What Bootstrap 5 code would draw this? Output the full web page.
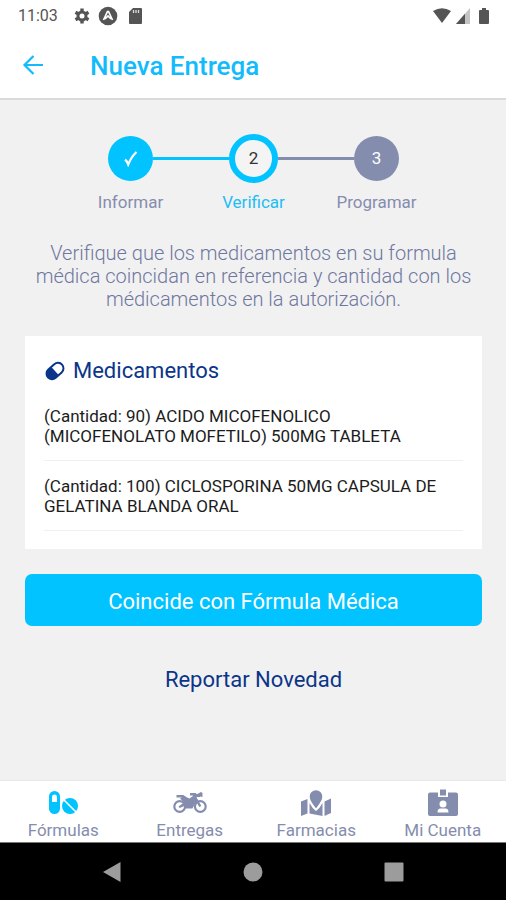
<!DOCTYPE html>
<html lang="es">
<head>
<meta charset="utf-8">
<meta name="viewport" content="width=device-width, initial-scale=1">
<title>Nueva Entrega</title>
<link href="https://cdn.jsdelivr.net/npm/bootstrap@5.3.0/dist/css/bootstrap.min.css" rel="stylesheet">
<style>
  :root { --sky: #00c3ff; --slate: #858dae; --navy: #0b3589; }
  body { font-family: Roboto, "Noto Sans", sans-serif; background: #f1f1f1; color: #1c1c1c; }
  svg { display: block; }
  .status { height: 32px; padding: 0 16px 0 18px; font-size: 16px; color: #555; }
  .topbar { height: 68px; padding: 2px 22px 0; border-bottom: 2px solid #dadada; gap: 46px; }
  .topbar h1 { font-size: 26px; line-height: 32px; font-weight: 500; color: #12bbfb; }
  .content { padding: 34px 24px 24px 25px; }
  .steps { max-width: 369px; }
  .step { flex: 1 1 0; color: var(--slate); font-size: 17px; line-height: 24px; }
  .track { height: 48px; }
  .track::before, .track::after { content: ""; flex: 1; height: 3px; background: var(--slate); }
  .step:first-child .track::before, .step:last-child .track::after { background: transparent; }
  .step.done .track::after, .step.now .track::before { background: var(--sky); }
  .dot { width: 45px; height: 45px; border-radius: 50%; background: var(--slate); color: #fff; }
  .done .dot { background: var(--sky); }
  .now .dot { width: 49px; height: 49px; background: #f4f4f4; border: 6px solid var(--sky); color: #333; }
  .now .caption { color: #22bdf5; }
  .caption { margin-top: 8px; }
  .intro { margin: 28px 0 25px; padding: 0 4px; color: #6f779f; font-size: 20px; font-weight: 300; line-height: 23px; }
  .panel { padding: 19px 19px 18px; }
  .panel h2 { font-size: 22px; line-height: 32px; font-weight: 400; color: var(--navy); gap: 7px; margin-bottom: 3px; }
  .meds li { font-size: 17px; line-height: 20px; padding: 16px 0 14px; border-bottom: 1px solid #eef1f1; }
  .meds li + li { padding-top: 15px; }
  .main-action { margin-top: 25px; height: 52px; border-radius: 7px; background: var(--sky); color: #fff; font-size: 22px; line-height: 32px; }
  .main-action:hover { background: #00b4ec; color: #fff; }
  .second-action { margin-top: 38px; color: var(--navy); font-size: 22px; line-height: 32px; }
  .tabs { height: 62px; border-top: 1px solid #e8e8e8; font-size: 17px; line-height: 20px; }
  .tabs a { color: var(--slate); padding-top: 8px; gap: 3px; }
  .tabs a.active svg { color: var(--sky); }
  .sysnav { height: 58px; background: #000; border-top: 1px solid #777; padding: 0 42px; }
  .sysnav button { flex: 1; color: #9c9c9c; }
</style>
<script src="https://cdn.jsdelivr.net/npm/bootstrap@5.3.0/dist/js/bootstrap.bundle.min.js"></script>
</head>
<body>
<div class="d-flex flex-column min-vh-100">
  <div class="status bg-white d-flex align-items-center">
    <span>11:03</span>
    <svg class="ms-3" width="16" height="16" viewBox="0 0 16 16"><g fill="none" stroke="currentColor"><circle cx="8" cy="8" r="4" stroke-width="3"/><path stroke-width="3.4" d="M8 .5v3M8 12.500v3M1.500 4.250l2.600 1.500M11.900 10.250l2.600 1.500M1.500 11.750l2.600-1.500M11.900 5.750l2.600-1.500"/></g></svg>
    <svg class="ms-2" width="20" height="20" viewBox="0 0 20 20"><circle cx="10" cy="10" r="9.300" fill="currentColor"/><path d="M5.500 14 9.500 5.500h1l4 8.500M7 13 10 10l3 3" fill="none" stroke="#fff" stroke-width="1.700"/></svg>
    <svg class="ms-2" width="18" height="18" viewBox="0 0 18 18"><path fill="currentColor" d="M7 1h8q1 0 1 1v14q0 1-1 1H4q-1 0-1-1V5z"/><path stroke="#ddd" stroke-width="1.300" d="M7.500 3v3M10 3v3M12.500 3v3"/></svg>
    <svg class="ms-auto" width="20" height="18" viewBox="0 0 20 18"><path fill="currentColor" d="M1 4q9-5.500 18 0l-9 12z"/></svg>
    <svg class="ms-1" width="14" height="16" viewBox="0 0 14 16"><path fill="#c4c4c4" d="M14 0v16H0z"/><path fill="currentColor" d="M9 5.700V16H0z"/></svg>
    <svg class="ms-2" width="12" height="18" viewBox="0 0 12 18"><path fill="currentColor" d="M4 1h4v2h2q1 0 1 1v12q0 1-1 1H2q-1 0-1-1V4q0-1 1-1h2z"/></svg>
  </div>
  <header class="topbar bg-white d-flex align-items-center">
    <button type="button" class="btn p-0 border-0" aria-label="Volver"><svg width="22" height="22" viewBox="0 0 22 22" fill="none" stroke="#12bbfb" stroke-width="2.200"><path d="M21 10H3M11.500 1 2.500 10l9 9"/></svg></button>
    <h1 class="m-0">Nueva Entrega</h1>
  </header>

  <main class="content flex-grow-1 d-flex flex-column">
    <div class="steps d-flex w-100 mx-auto text-center">
      <div class="step done">
        <div class="track d-flex align-items-center"><span class="dot d-flex align-items-center justify-content-center"><svg width="16" height="18" viewBox="0 0 16 18"><path d="M2 10.500Q4 12 5.200 15.500 8.500 7.500 13.500 3" fill="none" stroke="#fff" stroke-width="2.200"/></svg></span></div>
        <div class="caption">Informar</div>
      </div>
      <div class="step now">
        <div class="track d-flex align-items-center"><span class="dot d-flex align-items-center justify-content-center">2</span></div>
        <div class="caption">Verificar</div>
      </div>
      <div class="step">
        <div class="track d-flex align-items-center"><span class="dot d-flex align-items-center justify-content-center">3</span></div>
        <div class="caption">Programar</div>
      </div>
    </div>

    <p class="intro text-center">Verifique que los medicamentos en su formula médica coincidan en referencia y cantidad con los médicamentos en la autorización.</p>

    <section class="panel bg-white">
      <h2 class="d-flex align-items-center"><svg width="22" height="20" viewBox="0 0 22 20"><g transform="rotate(-42 11 10)"><rect x="1.500" y="4.500" width="19" height="11" rx="5.500" fill="#fff" stroke="currentColor" stroke-width="2"/><path fill="currentColor" d="M11 4.500v11H7a5.500 5.500 0 0 1 0-11z"/></g></svg>Medicamentos</h2>
      <ul class="meds list-unstyled mb-0">
        <li>(Cantidad: 90) ACIDO MICOFENOLICO (MICOFENOLATO MOFETILO) 500MG TABLETA</li>
        <li>(Cantidad: 100) CICLOSPORINA 50MG CAPSULA DE GELATINA BLANDA ORAL</li>
      </ul>
    </section>

    <button type="button" class="main-action btn border-0 w-100 pt-1 pb-0">Coincide con Fórmula Médica</button>
    <a href="#" class="second-action align-self-center text-decoration-none">Reportar Novedad</a>
  </main>

  <nav class="tabs bg-white d-flex" aria-label="Principal">
    <a href="#" class="active col-3 d-flex flex-column align-items-center text-decoration-none">
      <svg width="32" height="28" viewBox="0 0 32 28"><rect x="2" y="2" width="11" height="23" rx="5.500" fill="currentColor"/><path fill="#fff" d="M5 13V8a2.500 2.500 0 0 1 5 0v5z"/><circle cx="23" cy="17" r="8" fill="currentColor"/><path stroke="#fff" stroke-width="1.600" d="m16.500 10.500 13 13"/></svg>
      <span>Fórmulas</span></a>
    <a href="#" class="col-3 d-flex flex-column align-items-center text-decoration-none">
      <svg width="34" height="28" viewBox="0 0 34 28"><g fill="none" stroke="currentColor" stroke-width="2.200"><circle cx="6.700" cy="17.500" r="5.400"/><circle cx="27.300" cy="17.500" r="5.400"/><path stroke-width="2.400" d="m20.500 5.500 6.800 12M3.500 7.200h6.500l3 2M17 5.200h5l2 1.500h3"/></g><path fill="currentColor" d="M7 9.500 9 8h4l3.500 1.500L20 7l3 .5 2 4.500-3.500 3.500-2 4H12.500L11.500 17l-5 2-1-1.500 5.500-4z"/><path fill="currentColor" d="m23.500 5.500 4.500-2.500 1.500 1v4l-5-1z"/></svg>
      <span>Entregas</span></a>
    <a href="#" class="col-3 d-flex flex-column align-items-center text-decoration-none">
      <svg width="32" height="28" viewBox="0 0 32 28"><g fill="currentColor"><path d="M1 12.500 7.500 10v14.500L1 27zM31 9.500V24l-6.500 3V12.500zM9.500 14q2.500 5 6.500 8 4-3 6.500-8v13l-13-2.500z"/><path stroke="#fff" stroke-width="1.400" d="M16 20.500C13 16.500 9 12.500 9 7.500a7 7 0 0 1 14 0c0 5-4 9-7 13z"/></g></svg>
      <span>Farmacias</span></a>
    <a href="#" class="col-3 d-flex flex-column align-items-center text-decoration-none">
      <svg width="32" height="28" viewBox="0 0 32 28"><path fill="currentColor" d="M3 3.500h8V8h10V3.500h8q2 0 2 2V25q0 2-2 2H3q-2 0-2-2V5.500q0-2 2-2zM13 .5h6v6h-6z"/><circle cx="16" cy="15" r="3.500" fill="#fff"/><path fill="#fff" d="M10.500 23.500q0-4 3-4h5q3 0 3 4z"/></svg>
      <span>Mi Cuenta</span></a>
  </nav>
  <div class="sysnav d-flex align-items-center">
    <button type="button" class="btn p-0 border-0 d-flex justify-content-center" aria-label="Atrás"><svg width="20" height="22" viewBox="0 0 20 22"><path fill="currentColor" d="M18.500 1v20L1 11z"/></svg></button>
    <button type="button" class="btn p-0 border-0 d-flex justify-content-center" aria-label="Inicio"><svg width="20" height="20" viewBox="0 0 20 20"><circle cx="10" cy="10" r="9.500" fill="currentColor"/></svg></button>
    <button type="button" class="btn p-0 border-0 d-flex justify-content-center" aria-label="Recientes"><svg width="20" height="20" viewBox="0 0 20 20"><rect x=".5" y=".5" width="19" height="19" rx="1" fill="currentColor"/></svg></button>
  </div>
</div>
</body>
</html>
